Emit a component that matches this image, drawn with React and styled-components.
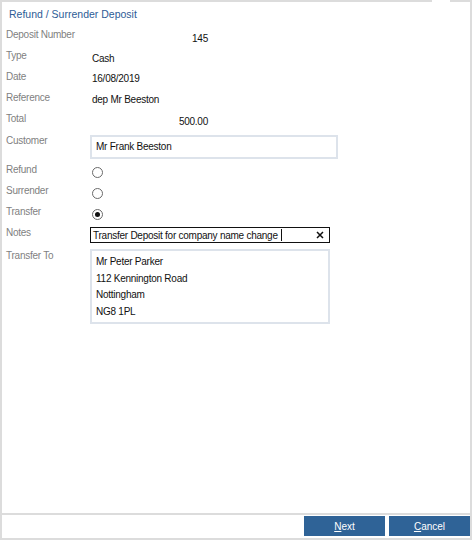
import React from "react";
import styled, { createGlobalStyle } from "styled-components";

const Global = createGlobalStyle`
  html, body { margin: 0; padding: 0; background: #fff; }
  body { font-family: "Liberation Sans", Arial, sans-serif; font-size: 10px; color: #111; letter-spacing: -0.25px; }
  * { box-sizing: border-box; }
`;

const Frame = styled.div`
  position: relative;
  width: 472px;
  height: 540px;
  border: 2px solid #dcdcdc;
  display: flex;
  flex-direction: column;
  background: #fff;
`;

const CloseTab = styled.div`
  position: absolute;
  top: -2px;
  right: 20px;
  width: 18px;
  height: 3px;
  background: #fff;
`;

const Header = styled.div`
  padding: 5px 0 0 7px;
  height: 26px;
`;

const Title = styled.div`
  font-size: 10.5px;
  line-height: 14px;
  letter-spacing: 0;
  color: #2d5c96;
`;

const Body = styled.div`
  flex: 1;
  display: flex;
  flex-direction: column;
  padding-left: 4px;
`;

const Row = styled.div`
  display: grid;
  grid-template-columns: 84px 1fr;
  height: ${(p) => p.$h || 21}px;
`;

const Label = styled.div`
  color: #7f7f7f;
  line-height: 13px;
  padding-top: ${(p) => p.$pt || 0}px;
`;

const Value = styled.div`
  line-height: 13px;
  padding: ${(p) => p.$pt ?? 3}px 0 0 2px;
  color: #111;
  width: ${(p) => (p.$num ? "118px" : "auto")};
  text-align: ${(p) => (p.$num ? "right" : "left")};
`;

const SoftBox = styled.div`
  margin-top: ${(p) => p.$mt || 0}px;
  width: ${(p) => p.$w}px;
  height: ${(p) => p.$h}px;
  border: 2px solid #dde3eb;
  padding: ${(p) => p.$pad || "0 4px"};
  line-height: ${(p) => p.$lh || 20}px;
  color: #111;
`;

const AddressLine = styled.div`
  line-height: 16.5px;
`;

const Radio = styled.span`
  display: inline-flex;
  align-items: center;
  justify-content: center;
  margin: 4px 0 0 2px;
  width: 11px;
  height: 11px;
  border-radius: 50%;
  border: 1px solid #6a6a6a;
  background: #fff;
  &::after {
    content: "";
    display: ${(p) => (p.$checked ? "block" : "none")};
    width: 5px;
    height: 5px;
    border-radius: 50%;
    background: #111;
  }
`;

const NotesInput = styled.div`
  margin-top: 1px;
  width: 240px;
  height: 16px;
  border: 1px solid #111;
  display: flex;
  align-items: center;
  padding: 0 5px 0 2px;
  color: #111;
  white-space: pre;
`;

const Caret = styled.span`
  display: inline-block;
  width: 1px;
  height: 12px;
  background: #111;
  margin-left: 1px;
`;

const Spacer = styled.span`
  flex: 1;
`;

const Footer = styled.div`
  height: 25px;
  border-top: 2px solid #dcdcdc;
  padding-top: 1px;
  display: flex;
  justify-content: flex-end;
  gap: 4px;
`;

const Button = styled.button`
  width: 81px;
  height: 20px;
  border: none;
  background: #2f6397;
  color: #fff;
  font-family: "Liberation Sans", Arial, sans-serif;
  font-size: 10px;
  padding: 0;
  cursor: pointer;
  u { text-decoration: underline; }
`;

const ClearIcon = () => (
  <svg width="8" height="8" viewBox="0 0 8 8">
    <path d="M1 1 L7 7 M7 1 L1 7" stroke="#111" strokeWidth="1.5" />
  </svg>
);

export default function App() {
  return (
    <>
      <Global />
      <Frame>
        <CloseTab />
        <Header>
          <Title>Refund / Surrender Deposit</Title>
        </Header>
        <Body>
          <Row>
            <Label>Deposit Number</Label>
            <Value $num $pt={4}>145</Value>
          </Row>
          <Row>
            <Label>Type</Label>
            <Value>Cash</Value>
          </Row>
          <Row>
            <Label>Date</Label>
            <Value $pt={2}>16/08/2019</Value>
          </Row>
          <Row>
            <Label>Reference</Label>
            <Value $pt={2}>dep Mr Beeston</Value>
          </Row>
          <Row>
            <Label>Total</Label>
            <Value $num $pt={3}>500.00</Value>
          </Row>
          <Row $h={30}>
            <Label $pt={1}>Customer</Label>
            <SoftBox $mt={2} $w={248} $h={24}>Mr Frank Beeston</SoftBox>
          </Row>
          <Row>
            <Label>Refund</Label>
            <div><Radio /></div>
          </Row>
          <Row>
            <Label>Surrender</Label>
            <div><Radio /></div>
          </Row>
          <Row>
            <Label>Transfer</Label>
            <div><Radio $checked /></div>
          </Row>
          <Row $h={22}>
            <Label>Notes</Label>
            <NotesInput>
              {"Transfer Deposit for company name change "}
              <Caret />
              <Spacer />
              <ClearIcon />
            </NotesInput>
          </Row>
          <Row $h={80}>
            <Label $pt={1}>Transfer To</Label>
            <SoftBox $mt={1} $w={240} $h={75} $pad="3px 4px 0 4px">
              <AddressLine>Mr Peter Parker</AddressLine>
              <AddressLine>112 Kennington Road</AddressLine>
              <AddressLine>Nottingham</AddressLine>
              <AddressLine>NG8 1PL</AddressLine>
            </SoftBox>
          </Row>
        </Body>
        <Footer>
          <Button><u>N</u>ext</Button>
          <Button><u>C</u>ancel</Button>
        </Footer>
      </Frame>
    </>
  );
}
